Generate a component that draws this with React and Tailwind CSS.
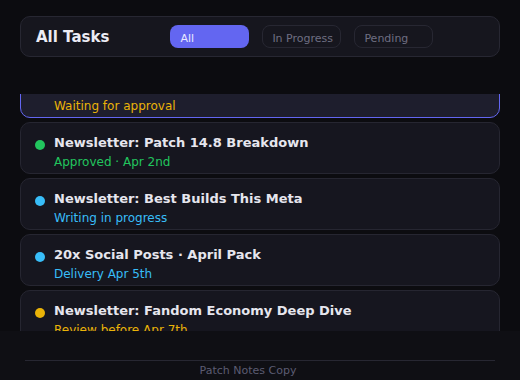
import React from "react";

const tasks = [
  { title: "Newsletter: Season Recap Weekly", sub: "Waiting for approval", dot: "bg-[#eab308]", color: "text-[#eab308]", selected: true },
  { title: "Newsletter: Patch 14.8 Breakdown", sub: "Approved · Apr 2nd", dot: "bg-[#22c55e]", color: "text-[#22c55e]" },
  { title: "Newsletter: Best Builds This Meta", sub: "Writing in progress", dot: "bg-[#38bdf8]", color: "text-[#38bdf8]" },
  { title: "20x Social Posts · April Pack", sub: "Delivery Apr 5th", dot: "bg-[#38bdf8]", color: "text-[#38bdf8]" },
  { title: "Newsletter: Fandom Economy Deep Dive", sub: "Review before Apr 7th", dot: "bg-[#eab308]", color: "text-[#eab308]" },
];

export default function App() {
  return (
    <div
      className="w-[520px] h-[380px] bg-[#0c0c10] flex flex-col overflow-hidden"
      style={{ fontFamily: '"DejaVu Sans", sans-serif' }}
    >
      <div className="px-5 pt-4">
        <div className="h-[41px] rounded-[10px] border border-[#272732] bg-[#16161e] flex items-center px-[15px]">
          <div className="text-[15px] font-bold text-[#ececf4] leading-5">All Tasks</div>
          <div className="flex gap-[13px] ml-[61px]">
            <div className="w-[79px] h-[23px] rounded-lg bg-[#6366f1] text-[11px] text-[#e8e9ff] px-[10px] flex items-center pt-[6px] whitespace-nowrap">All</div>
            <div className="w-[79px] h-[23px] rounded-lg border border-[#272732] text-[11px] text-[#6e6e82] px-[9px] flex items-center pt-[6px] whitespace-nowrap">In Progress</div>
            <div className="w-[79px] h-[23px] rounded-lg border border-[#272732] text-[11px] text-[#6e6e82] px-[9px] flex items-center pt-[6px] whitespace-nowrap">Pending</div>
          </div>
        </div>
      </div>
      <div className="mx-5 mt-[37px] h-[237px] overflow-hidden">
        <div className="-mt-[28px] flex flex-col gap-1">
          {tasks.map((t, i) => (
            <div
              key={i}
              className={
                "h-[52px] shrink-0 rounded-[10px] border px-[14px] pt-[12px] " +
                (t.selected ? "border-[#6366f1] bg-[#1e1e2d]" : "border-[#262631] bg-[#16161f]")
              }
            >
              <div className="flex items-start">
                <div className={"w-[10px] h-[10px] rounded-full mt-[5px] shrink-0 " + (t.selected ? "opacity-0 " : "") + t.dot}></div>
                <div className="ml-[9px] flex flex-col">
                  <div className="text-[13px] font-bold text-[#e6e6ee] leading-4 whitespace-nowrap">{t.title}</div>
                  <div className={"text-[12px] leading-4 mt-[3px] whitespace-nowrap " + t.color}>{t.sub}</div>
                </div>
              </div>
            </div>
          ))}
        </div>
      </div>
      <div className="flex-1 bg-[#0f0f14] px-[25px] pt-[29px]">
        <div className="border-t border-[#272732] text-center text-[11px] text-[#5c5c72] leading-4 pt-[2px] pr-[24px]">
          Patch Notes Copy
        </div>
      </div>
    </div>
  );
}
